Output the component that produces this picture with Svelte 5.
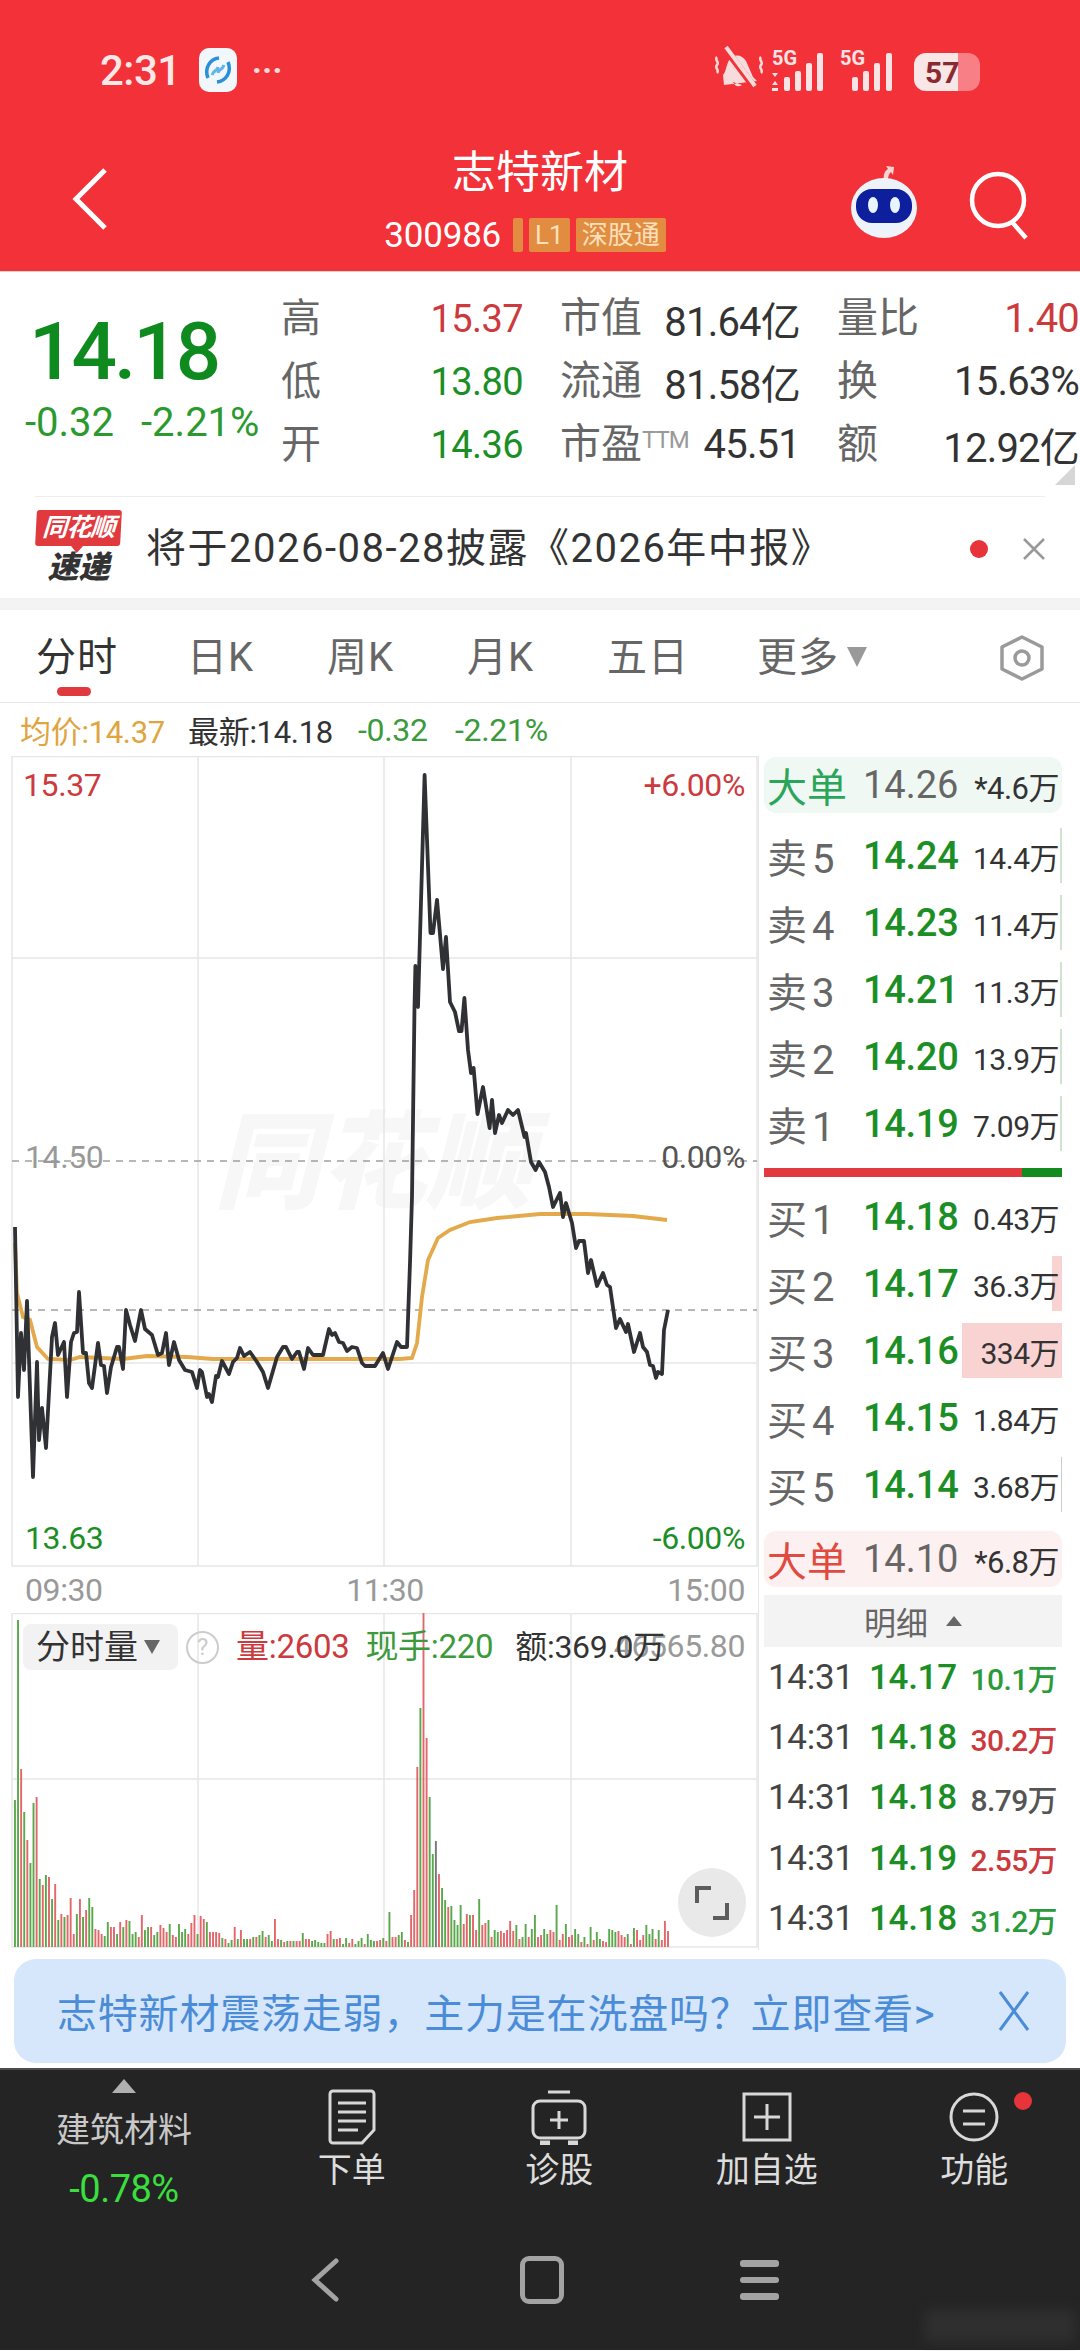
<script lang="ts">
  const quoteRows = [
    { k: "高", v: "15.37", c: "up", k2: "市值", v2: "81.64亿", k3: "量比", v3: "1.40", c3: "up" },
    { k: "低", v: "13.80", c: "down", k2: "流通", v2: "81.58亿", k3: "换", v3: "15.63%", c3: "" },
    { k: "开", v: "14.36", c: "down", k2: "市盈", ttm: true, v2: "45.51", k3: "额", v3: "12.92亿", c3: "" },
  ];
  const tabs = ["日K", "周K", "月K", "五日"];

  const sells = [
    ["卖", "5", "14.24", "14.4万"],
    ["卖", "4", "14.23", "11.4万"],
    ["卖", "3", "14.21", "11.3万"],
    ["卖", "2", "14.20", "13.9万"],
    ["卖", "1", "14.19", "7.09万"],
  ];
  const buys = [
    ["买", "1", "14.18", "0.43万", 0],
    ["买", "2", "14.17", "36.3万", 10],
    ["买", "3", "14.16", "334万", 100],
    ["买", "4", "14.15", "1.84万", 0],
    ["买", "5", "14.14", "3.68万", 1],
  ];
  const trades = [
    ["14.17", "10.1万", "down"],
    ["14.18", "30.2万", "up"],
    ["14.18", "8.79万", ""],
    ["14.19", "2.55万", "up"],
    ["14.18", "31.2万", "down"],
  ];

  const price =
    "15,1227 18,1397 21,1333 24,1370 27,1301 33,1477 37,1362 39,1440 42,1408 46,1448 52,1337 55,1323 58,1355 64,1342 67,1397 71,1342 74,1333 77,1332 79,1292 83,1353 86,1353 89,1383 92,1388 98,1343 101,1365 104,1366 107,1393 111,1367 117,1347 119,1347 123,1369 126,1310 130,1325 135,1341 141,1310 145,1329 152,1335 158,1355 162,1353 166,1333 169,1365 174,1342 179,1360 185,1370 192,1372 197,1388 200,1370 202,1372 207,1397 209,1394 212,1402 216,1376 218,1377 222,1361 229,1374 233,1362 237,1358 240,1348 244,1356 250,1352 257,1362 263,1372 268,1388 277,1357 283,1347 286,1347 292,1359 297,1352 299,1352 304,1369 308,1348 313,1355 323,1355 329,1329 332,1335 335,1333 339,1342 343,1343 347,1351 352,1347 357,1348 362,1363 365,1366 375,1366 383,1353 388,1369 392,1357 397,1342 401,1347 407,1347 410,1263 412,1197 414.5,1007 415.4,966 418,1007 424.6,775 430.5,933 433,933 437,900 443,969 446,937 450,1002 455,1012 459,1031 461.5,1031 464.4,998 468,1050 471,1073 473.6,1068 477.5,1114 483,1087 489.6,1128 492,1100 495,1133 499,1115 502,1123 508,1110 513,1115 518,1110 524.5,1137 526,1133 531,1162 535.6,1170 539,1162 545,1172 549,1187 553,1207 560,1193 563,1217 566,1203 572,1223 576,1248 579,1241 584,1241 588,1273 591,1260 597,1286 603,1273 607,1285 610,1287 616,1328 620,1319 626,1332 628,1324 634,1352 640,1333 643,1347 647,1352 650,1365 653,1366 656,1378 658,1372 662,1374 664,1330 668,1310";
  const average =
    "15,1243 17,1293 23,1317 30,1320 37,1347 48,1359 70,1360 80,1357 100,1358 123,1359 147,1356 187,1357 213,1359 260,1359 333,1359 400,1359 412,1358 417,1343 422,1297 428,1260 438,1238 450,1230 470,1222 497,1218 540,1214 587,1214 633,1216 667,1220";

  // positive = red bar, negative = green bar
  const volume = [
    -147, -327, 178, -135, 107, -84, -144, 150, -68, 62, -72, 70, -48, 63, -27, 33, -30, 32, 49, 13, -33, 48, -30, 37, -49, -40, 18, 17, 13, -11,
    -25, 20, 20, -13, 25, -20, 27, -26, -13, -15, 10, 32, -17, -20, 20, -12, -15, 22, 19, 15, -23, 12, 10, -23, -15, -18, 13, 24, 32, -13,
    31, 28, -25, 15, 15, 15, 14, -9, 8, -4, -7, 20, -8, 17, -8, -8, 8, -10, 10, -12, -16, 10, -12, -6, 28, 8, -7, 5, -6, 6,
    -6, 6, 6, -14, 8, 8, -6, -7, -5, -4, -4, 13, 16, -8, 8, 9, -3, -9, 4, 8, -3, -6, -9, 3, -13, -7, -6, 6, 7, -9,
    6, -35, 10, 10, -12, -15, 7, -5, 32, 57, 180, -239, 334, 209, -150, -93, -106, 73, -59, -47, 40, -41, -27, -22, -42, 23, 33, -32, 32, 17,
    -48, 22, 24, -27, 10, -17, -15, 16, 14, 17, 26, 16, -22, 8, -10, -23, 10, -18, -32, 10, 12, -18, -13, 17, 15, -42, 7, 13, -23, 10,
    12, -18, -13, 5, -10, 3, -20, 7, -15, -8, 6, 5, -18, -17, -15, 16, 12, 10, -13, 3, -19, 17, 7, 12, -22, -13, -18, 8, -17, 7, 26, 16,
  ];
  const barColor = (h: number) => (h === -106 ? "#77787c" : h > 0 ? "#e2666a" : "#5aa84c");
</script>

<div class="page">
  <header class="top">
    <div class="status">
      <span class="clock">2:31</span>
      <svg class="appicon" viewBox="0 0 38 44" width="38" height="44">
        <rect width="38" height="44" rx="10" fill="#f2f7fc" />
        <path d="M9 30C5 20 11 11 20 10M29 14c4 10-2 19-11 20" fill="none" stroke="#2a8fd8" stroke-width="3.5" />
        <path d="M13 27c2-6 5-3 6-8M25 17c-2 6-5 3-6 8" fill="none" stroke="#5fb4e8" stroke-width="3" />
      </svg>
      <span class="dots">···</span>
      <span class="grow"></span>
      <svg class="sysicons" viewBox="0 0 270 50" width="270" height="50">
        <g fill="none" stroke="#f8dcdc" stroke-width="3">
          <path d="M11 30c4-4 3-14 9-18 5-3 11-1 14 4l7 16 4 4-33 4zM21 37c2 5 6 5 9 3" fill="#f8dcdc" stroke="none" />
          <path d="M12 2 42 42" stroke="#f23238" stroke-width="7" />
          <path d="M14 2 43 41" stroke-width="4" />
          <path d="M5 12c-3 3 3 5 0 8s3 5 0 8M49 12c-3 3 3 5 0 8s3 5 0 8" stroke-width="2.5" />
        </g>
        <g fill="#f8e4e4">
          <text x="60" y="20" class="fiveg">5G</text>
          <rect x="72" y="32" width="6" height="14" rx="2" /><rect x="83" y="26" width="6" height="20" rx="2" /><rect x="94" y="18" width="6" height="28" rx="2" /><rect x="105" y="8" width="6" height="38" rx="2" />
          <path d="M60 28l3 4 3-4zM60 40l3-4 3 4zM60 46h6v-3h-6z" />
          <text x="128" y="20" class="fiveg">5G</text>
          <rect x="140" y="32" width="6" height="14" rx="2" /><rect x="151" y="26" width="6" height="20" rx="2" /><rect x="162" y="18" width="6" height="28" rx="2" /><rect x="174" y="8" width="6" height="38" rx="2" />
        </g>
        <rect x="202" y="8" width="66" height="38" rx="12" fill="#f77f85" />
        <path d="M214 8h32v38h-32a12 12 0 0 1-12-12V20a12 12 0 0 1 12-12z" fill="#f9e6e6" />
        <text x="213" y="38" class="batt">57</text>
      </svg>
    </div>
    <div class="nav">
      <svg class="back" viewBox="0 0 50 70" width="50" height="70">
        <path d="M39 6 10 35l29 29" fill="none" stroke="#fff" stroke-width="5" />
      </svg>
      <div class="title">
        <div class="name">志特新材</div>
        <div class="code">
          <span>300986</span>
          <i class="tag stub"></i>
          <i class="tag">L1</i>
          <i class="tag">深股通</i>
        </div>
      </div>
      <svg class="robot" viewBox="0 0 72 80" width="72" height="80">
        <path d="M36 16c-1-6 1-9 4-11l-2-3 8 1-1 8-2-3c-2 2-3 4-3 8z" fill="#f6d6d0" />
        <ellipse cx="36" cy="44" rx="33" ry="30" fill="#eef3fa" />
        <rect x="8" y="25" width="56" height="34" rx="16" fill="#0d1f9c" />
        <ellipse cx="25" cy="41" rx="5" ry="8" fill="#e8f4ff" /><ellipse cx="47" cy="41" rx="5" ry="8" fill="#e8f4ff" />
      </svg>
      <svg class="search" viewBox="0 0 64 72" width="64" height="72">
        <circle cx="30" cy="30" r="26" fill="none" stroke="#fff" stroke-width="4.5" />
        <path d="M44 52 58 68" stroke="#fff" stroke-width="4.5" />
      </svg>
    </div>
  </header>

  <section class="quote">
    <div class="now">
      <div class="big">14.18</div>
      <div class="change"><span>-0.32</span><span>-2.21%</span></div>
    </div>
    <div class="facts">
      {#each quoteRows as r}
        <div class="fact">
          <span class="k">{r.k}</span>
          <span class="v {r.c}">{r.v}</span>
          <span class="k k2">{r.k2}{#if r.ttm}<sup>TTM</sup>{/if}</span>
          <span class="v dark">{r.v2}</span>
          <span class="k k3">{r.k3}</span>
          <span class="v dark {r.c3}">{r.v3}</span>
        </div>
      {/each}
    </div>
    <i class="corner"></i>
  </section>

  <section class="notice">
    <div class="logo">
      <div class="logo-red">同花顺</div>
      <div class="logo-txt">速递</div>
    </div>
    <span class="notice-text">将于2026-08-28披露《2026年中报》</span>
    <i class="dot"></i>
    <svg class="x" viewBox="0 0 24 24" width="24" height="24"><path d="M2 2 22 22M22 2 2 22" stroke="#999" stroke-width="2.5" /></svg>
  </section>
  <div class="band"></div>

  <nav class="tabs">
    <span class="tab active">分时<i></i></span>
    {#each tabs as t}<span class="tab">{t}</span>{/each}
    <span class="tab more">更多<b></b></span>
    <svg class="hex" viewBox="0 0 46 46" width="46" height="46">
      <path d="M23 2 43 12v22L23 44 3 34V12z" fill="none" stroke="#9a9a9a" stroke-width="3.5" stroke-linejoin="round" />
      <circle cx="23" cy="23" r="7" fill="none" stroke="#9a9a9a" stroke-width="3.5" />
    </svg>
  </nav>

  <div class="info">
    <span class="avg">均价:14.37</span>
    <span class="latest">最新:14.18</span>
    <span class="down">-0.32</span>
    <span class="down">-2.21%</span>
  </div>

  <main class="main">
    <div class="left">
      <div class="chart">
        <div class="mark">同花顺</div>
        <svg viewBox="0 756 758 811" width="758" height="811">
          <g stroke="#e6e6e6" stroke-width="1.5" fill="none">
            <rect x="12" y="756.5" width="745" height="809.5" />
            <path d="M198 756V1566M384 756V1566M571 756V1566M12 958H757M12 1363H757" />
          </g>
          <path d="M12 1161H757M12 1310H757" stroke="#a0a09a" stroke-width="1.5" stroke-dasharray="7 6" />
          <polyline points={average} fill="none" stroke="#e3a94a" stroke-width="3.8" />
          <polyline points={price} fill="none" stroke="#303135" stroke-width="3.8" stroke-linejoin="round" />
        </svg>
        <span class="lab tl up">15.37</span>
        <span class="lab tr up">+6.00%</span>
        <span class="lab ml gray">14.50</span>
        <span class="lab mr ink">0.00%</span>
        <span class="lab bl down">13.63</span>
        <span class="lab br down">-6.00%</span>
      </div>
      <div class="axis"><span>09:30</span><span>11:30</span><span>15:00</span></div>
      <div class="volume">
        <svg viewBox="0 1613 758 335" width="758" height="335">
          <g stroke="#e6e6e6" stroke-width="1.5" fill="none">
            <rect x="12" y="1613.5" width="745" height="333.5" />
            <path d="M198 1613V1947M384 1613V1947M571 1613V1947M12 1779H757" />
          </g>
          {#each volume as h, i}
            <rect x={14 + i * 3.095} y={1947 - Math.abs(h)} width="1.9" height={Math.abs(h)} fill={barColor(h)} />
          {/each}
        </svg>
        <span class="maxvol">46565.80</span>
        <div class="vol-head">
          <span class="pick">分时量<b></b></span>
          <span class="help">?</span>
          <span class="up">量:2603</span>
          <span class="down">现手:220</span>
          <span class="amt">额:369.0万</span>
        </div>
        <button class="expand" aria-label="expand">
          <svg viewBox="0 0 36 36" width="36" height="36"><path d="M3 18V3H17M33 18v15H19" fill="none" stroke="#5c5c5c" stroke-width="4" /></svg>
        </button>
      </div>
    </div>

    <aside class="book">
      <div class="bigorder buy">
        <span class="bo-k">大单</span><span class="bo-p">14.26</span><span class="bo-v">*4.6万</span>
      </div>
      <div class="levels sell">
        {#each sells as s}
          <div class="level">
            <span class="lv-k">{s[0]}<em>{s[1]}</em></span><span class="lv-p">{s[2]}</span><span class="lv-v">{s[3]}</span>
            <i class="sellbar"></i>
          </div>
        {/each}
      </div>
      <div class="ratio"><i></i></div>
      <div class="levels buys">
        {#each buys as b}
          <div class="level">
            <i class="buybar" class:thin={b[4] === 1} style={`width: ${b[4]}px`}></i>
            <span class="lv-k">{b[0]}<em>{b[1]}</em></span><span class="lv-p">{b[2]}</span><span class="lv-v">{b[3]}</span>
          </div>
        {/each}
      </div>
      <div class="bigorder sellside">
        <span class="bo-k">大单</span><span class="bo-p">14.10</span><span class="bo-v">*6.8万</span>
      </div>
      <div class="detail-head">明细<b></b></div>
      <div class="trades">
        {#each trades as t}
          <div class="trade">
            <span class="t-t">14:31</span><span class="t-p">{t[0]}</span><span class="t-v {t[2]}">{t[1]}</span>
          </div>
        {/each}
      </div>
    </aside>
  </main>

  <div class="banner">
    <span>志特新材震荡走弱，主力是在洗盘吗？立即查看&gt;</span>
    <svg viewBox="0 0 32 42" width="32" height="42"><path d="M2 2 30 40M30 2 2 40" stroke="#4a8cd8" stroke-width="3" /></svg>
  </div>

  <footer class="bottom">
    <div class="actions">
      <div class="sector">
        <i></i>
        <span>建筑材料</span>
        <span class="sector-pct">-0.78%</span>
      </div>
      <div class="act">
        <svg viewBox="0 0 50 56" width="50" height="56" fill="none" stroke="#d8d8d8" stroke-width="3">
          <path d="M6 2h38a3 3 0 0 1 3 3v36l-12 13H6a3 3 0 0 1-3-3V5a3 3 0 0 1 3-3z" />
          <path d="M11 14h28M11 23h28M11 32h28M11 41h20" />
        </svg>
        <span>下单</span>
      </div>
      <div class="act">
        <svg viewBox="0 0 56 56" width="56" height="56" fill="none" stroke="#d8d8d8" stroke-width="3">
          <path d="M17 3h22" />
          <rect x="2" y="12" width="52" height="37" rx="7" />
          <path d="M9 54h10M37 54h10" stroke-width="5" />
          <path d="M28 22v18M19 31h18" />
        </svg>
        <span>诊股</span>
      </div>
      <div class="act">
        <svg viewBox="0 0 50 50" width="50" height="50" fill="none" stroke="#d8d8d8" stroke-width="3" class="plus">
          <rect x="2" y="2" width="46" height="46" />
          <path d="M25 12v26M12 25h26" />
        </svg>
        <span>加自选</span>
      </div>
      <div class="act">
        <svg viewBox="0 0 50 50" width="50" height="50" fill="none" stroke="#d8d8d8" stroke-width="3" class="plus">
          <circle cx="25" cy="25" r="23" />
          <path d="M14 19h22M14 32h22" />
        </svg>
        <span>功能</span>
        <i class="badge"></i>
      </div>
    </div>
    <div class="sysnav">
      <svg viewBox="0 0 28 44" width="28" height="44"><path d="M25 3 4 22l21 19" fill="none" stroke="#a3a3a3" stroke-width="5" stroke-linecap="round" /></svg>
      <i class="home"></i>
      <i class="menu"><b></b><b></b><b></b></i>
    </div>
  </footer>
</div>

<style>
  :global(body) {
    margin: 0;
    background: #fff;
  }

  .page {
    width: 1080px;
    height: 2351px;
    overflow: hidden;
    background: #fff;
    font-family: Roboto, "Noto Sans CJK SC", sans-serif;
    color: #333;
  }

  i,
  em {
    font-style: normal;
  }

  .up {
    color: #cc3a3e;
  }

  .down {
    color: #1b8f26;
  }

  /* header */
  .top {
    height: 271px;
    background: #f23238;
    color: #fff;
    border-bottom: 1px solid #d8d0d0;
  }

  .status {
    display: flex;
    align-items: center;
    height: 140px;
    padding: 0 98px 0 100px;
    box-sizing: border-box;
  }

  .clock {
    font-size: 42px;
    font-weight: 500;
    color: #fde8e8;
    letter-spacing: -0.5px;
  }

  .appicon {
    margin-left: 18px;
  }

  .dots {
    margin-left: 15px;
    font-size: 34px;
    font-weight: 700;
    line-height: 1;
    color: #fbd9d9;
  }

  .grow {
    flex: 1;
  }

  .fiveg {
    font-size: 20px;
    font-weight: 700;
  }

  .batt {
    font-size: 30px;
    font-weight: 700;
    fill: #8a2a30;
  }

  .nav {
    display: flex;
    align-items: flex-start;
    height: 131px;
    padding-left: 66px;
    margin-top: -8px;
  }

  .back {
    margin-top: 32px;
    flex: none;
  }

  .title {
    flex: none;
    width: 600px;
    margin-left: 124px;
    text-align: center;
  }

  .name {
    margin-top: 10px;
    font-size: 44px;
    line-height: 62px;
    color: #fff;
  }

  .code {
    display: flex;
    align-items: center;
    justify-content: center;
    gap: 6px;
    height: 46px;
    margin-top: 8px;
    padding-right: 30px;
    font-size: 35px;
    letter-spacing: -0.2px;
    color: #fff;
  }

  .tag {
    background: #e28c41;
    color: #fbe0bc;
    font-size: 26px;
    line-height: 34px;
    padding: 0 6px;
    letter-spacing: 0;
    border-radius: 2px;
  }

  .tag.stub {
    width: 10px;
    height: 34px;
    box-sizing: border-box;
    padding: 0;
    margin-left: 6px;
  }

  .robot {
    flex: none;
    margin: 32px 0 0 8px;
  }

  .search {
    flex: none;
    margin: 38px 0 0 48px;
  }

  /* quote */
  .quote {
    position: relative;
    display: flex;
    height: 224px;
  }

  .now {
    width: 281px;
    flex: none;
  }

  .big {
    margin: 34px 0 0 29px;
    font-size: 80px;
    line-height: 92px;
    font-weight: 500;
    letter-spacing: -3px;
    color: #0f8a1e;
  }

  .change {
    display: flex;
    gap: 27px;
    margin: 3px 0 0 25px;
    font-size: 40px;
    line-height: 44px;
    letter-spacing: 0;
    color: #2a9a2e;
    white-space: nowrap;
  }

  .facts {
    flex: 1;
    padding-top: 15px;
  }

  .fact {
    display: grid;
    grid-template-columns: 60px 182px 120px 157px 120px 1fr;
    align-items: center;
    height: 63px;
    white-space: nowrap;
    padding-right: 1px;
  }

  .k {
    font-size: 40px;
    color: #666;
    line-height: 63px;
  }

  .k2,
  .k3 {
    margin-left: 37px;
    font-size: 41px;
  }

  sup {
    font-size: 24px;
    color: #999;
    vertical-align: 10px;
    line-height: 0;
    letter-spacing: -1px;
  }

  .v {
    text-align: right;
    font-size: 38px;
    letter-spacing: -0.6px;
  }

  .dark {
    font-size: 40px;
    letter-spacing: -0.8px;
    color: #333;
  }

  .dark.up {
    color: #cc3a3e;
  }

  .corner {
    position: absolute;
    right: 5px;
    bottom: 11px;
    border-left: 20px solid transparent;
    border-bottom: 20px solid #d6d6d6;
  }

  /* notice */
  .notice {
    display: flex;
    align-items: center;
    height: 102px;
    margin: 0 35px;
    border-top: 1px solid #eee;
    box-sizing: border-box;
    position: relative;
  }

  .logo {
    width: 85px;
    flex: none;
    margin-left: 1px;
    text-align: center;
  }

  .logo-red {
    position: relative;
    height: 36px;
    background: #e0393e;
    color: #fff;
    font-size: 25px;
    font-weight: 700;
    font-style: italic;
    line-height: 36px;
    letter-spacing: -1px;
    border-radius: 3px;
    transform: skewX(-3deg);
  }

  .logo-red::after {
    content: "";
    position: absolute;
    left: 36px;
    top: 36px;
    border-left: 6px solid transparent;
    border-right: 6px solid transparent;
    border-top: 7px solid #e0393e;
  }

  .logo-txt {
    margin-top: 5px;
    font-size: 31px;
    line-height: 34px;
    font-weight: 900;
    font-style: italic;
    color: #333;
  }

  .notice-text {
    margin: -6px 0 0 25px;
    font-size: 40px;
    letter-spacing: 1.5px;
    color: #333;
    white-space: nowrap;
  }

  .dot {
    position: absolute;
    left: 935px;
    top: 43px;
    width: 18px;
    height: 18px;
    border-radius: 50%;
    background: #e7333a;
  }

  .x {
    position: absolute;
    left: 987px;
    top: 40px;
  }

  .band {
    height: 12px;
    background: #f3f3f3;
  }

  /* tabs */
  .tabs {
    position: relative;
    height: 93px;
    border-bottom: 1px solid #e8e8e8;
    display: flex;
    box-sizing: border-box;
    padding-left: 36px;
    align-items: center;
  }

  .tab {
    position: relative;
    width: 140px;
    font-size: 40px;
    color: #666;
    letter-spacing: 1px;
    white-space: nowrap;
    margin-top: -4px;
  }

  .tab:first-child {
    width: 151px;
  }

  .more {
    margin-left: 10px;
  }

  .active {
    color: #333;
  }

  .active i {
    position: absolute;
    left: 21px;
    top: 62px;
    width: 34px;
    height: 9px;
    border-radius: 5px;
    background: #e0393e;
  }

  .more b {
    display: inline-block;
    margin-left: 8px;
    vertical-align: 4px;
    border-left: 10px solid transparent;
    border-right: 10px solid transparent;
    border-top: 20px solid #999;
  }

  .hex {
    position: absolute;
    left: 999px;
    top: 25px;
  }

  .info {
    display: flex;
    align-items: center;
    height: 53px;
    padding-left: 20px;
    font-size: 31px;
    letter-spacing: -0.3px;
    color: #333;
    white-space: nowrap;
  }

  .avg {
    color: #e0a440;
    width: 168px;
  }

  .latest {
    width: 170px;
  }

  .info .down {
    width: 97px;
    font-size: 32px;
    color: #3c9a3c;
  }

  /* main area */
  .main {
    display: flex;
    height: 1194px;
  }

  .left {
    width: 758px;
    flex: none;
  }

  .chart,
  .volume {
    position: relative;
    line-height: 0;
  }

  .chart svg,
  .volume svg {
    display: block;
  }

  .mark {
    position: absolute;
    left: 214px;
    top: 348px;
    font-size: 106px;
    line-height: 120px;
    font-weight: 900;
    font-style: italic;
    color: #f7f7f7;
    white-space: nowrap;
  }

  .chart > svg {
    position: relative;
  }

  .lab {
    position: absolute;
    font-size: 32px;
    line-height: 36px;
    letter-spacing: -0.4px;
  }

  .tl {
    left: 23px;
    top: 11px;
  }

  .tr {
    right: 13px;
    top: 11px;
  }

  .ml {
    left: 25px;
    top: 383px;
    color: #999;
  }

  .mr {
    right: 13px;
    top: 383px;
    color: #555;
  }

  .bl {
    left: 25px;
    top: 764px;
  }

  .br {
    right: 13px;
    top: 764px;
  }

  .axis {
    display: flex;
    justify-content: space-between;
    height: 46px;
    padding: 0 13px 0 25px;
    align-items: center;
    font-size: 32px;
    letter-spacing: -0.4px;
    color: #999;
  }

  .vol-head {
    position: absolute;
    left: 23px;
    top: 11px;
    display: flex;
    align-items: center;
    font-size: 33px;
    line-height: 46px;
    white-space: nowrap;
    letter-spacing: -0.3px;
  }

  .pick {
    display: flex;
    align-items: center;
    width: 155px;
    height: 46px;
    box-sizing: border-box;
    padding-left: 13px;
    background: #f2f2f2;
    border-radius: 8px;
    color: #333;
    font-size: 34px;
    letter-spacing: 0;
  }

  .pick b {
    margin-left: 6px;
    border-left: 8px solid transparent;
    border-right: 8px solid transparent;
    border-top: 14px solid #666;
  }

  .help {
    width: 29px;
    height: 29px;
    margin: 0 17px 0 8px;
    border: 2.5px solid #ccc;
    border-radius: 50%;
    text-align: center;
    font-size: 24px;
    line-height: 29px;
    color: #ccc;
  }

  .vol-head .down {
    margin-left: 16px;
    color: #3c9a3c;
  }

  .amt {
    margin-left: 22px;
    font-size: 32px;
    color: #333;
  }

  .vol-head .up {
    color: #cc3a3e;
  }

  .maxvol {
    position: absolute;
    right: 13px;
    top: 15px;
    font-size: 32px;
    line-height: 36px;
    letter-spacing: -0.4px;
    color: #999;
  }

  .expand {
    position: absolute;
    left: 678px;
    top: 255px;
    width: 68px;
    height: 69px;
    padding: 0;
    border: 0;
    border-radius: 50%;
    background: #e9e9e9;
    display: flex;
    align-items: center;
    justify-content: center;
  }

  /* order book */
  .book {
    width: 322px;
    box-sizing: border-box;
    padding-left: 5px;
    border-left: 1.5px solid #e6e6e6;
  }

  .bigorder,
  .level,
  .trade {
    display: flex;
    align-items: center;
    position: relative;
    width: 298px;
    white-space: nowrap;
  }

  .bigorder {
    height: 56px;
    border-radius: 12px;
    margin-top: 1px;
  }

  .bigorder.buy {
    background: #f0f8f4;
  }

  .bigorder.buy .bo-k {
    color: #2aa55a;
  }

  .bigorder.sellside {
    margin-top: 13px;
    background: #fdf0f0;
  }

  .bigorder.sellside .bo-k {
    color: #e04a40;
  }

  .bo-k {
    width: 99px;
    padding-left: 3px;
    box-sizing: border-box;
    font-size: 40px;
  }

  .bo-p {
    width: 95px;
    font-size: 38px;
    color: #666;
  }

  .bo-v,
  .lv-v {
    position: relative;
    flex: 1;
    text-align: right;
    padding-right: 3px;
    font-size: 30px;
    letter-spacing: -0.5px;
    color: #333;
  }

  .bo-v {
    font-size: 31px;
  }

  .levels {
    position: relative;
  }

  .levels.sell {
    margin-top: 9px;
  }

  .level {
    height: 67px;
  }

  .lv-k {
    position: relative;
    width: 99px;
    padding-left: 3px;
    box-sizing: border-box;
    font-size: 40px;
    color: #666;
  }

  .lv-k em {
    margin-left: 5px;
  }

  .lv-p {
    position: relative;
    width: 95px;
    font-size: 38px;
    font-weight: 500;
    letter-spacing: -0.3px;
    color: #1b8f26;
  }

  .sellbar {
    position: absolute;
    right: 0;
    top: 6px;
    bottom: 6px;
    width: 2px;
    background: #cfe3cf;
  }

  .buybar {
    position: absolute;
    right: 0;
    top: 6px;
    bottom: 6px;
    background: #f9d2d2;
  }

  .buybar.thin {
    background: #ccc;
  }

  .ratio {
    height: 9px;
    margin-top: 11px;
    width: 298px;
    background: #128c1e;
  }

  .ratio i {
    display: block;
    width: 258px;
    height: 100%;
    background: #e0393e;
  }

  .buys {
    margin-top: 6px;
  }

  .detail-head {
    display: flex;
    align-items: center;
    justify-content: center;
    gap: 18px;
    width: 298px;
    height: 52px;
    margin-top: 8px;
    background: #f3f3f3;
    font-size: 32px;
    color: #666;
  }

  .detail-head b {
    border-left: 8px solid transparent;
    border-right: 8px solid transparent;
    border-bottom: 10px solid #666;
  }

  .trade {
    height: 60.4px;
  }

  .t-t {
    width: 105px;
    padding-left: 4px;
    box-sizing: border-box;
    font-size: 35px;
    letter-spacing: -0.3px;
    color: #444;
  }

  .t-p {
    width: 91px;
    font-size: 35px;
    font-weight: 500;
    letter-spacing: -0.3px;
    color: #1b8f26;
  }

  .t-v {
    flex: 1;
    text-align: right;
    padding-right: 5px;
    font-size: 30px;
    font-weight: 500;
    letter-spacing: -0.6px;
    color: #555;
  }

  .t-v.up {
    color: #cc3a3e;
  }

  .t-v.down {
    color: #2a9a3a;
  }

  /* banner */
  .banner {
    display: flex;
    align-items: center;
    justify-content: space-between;
    height: 104px;
    margin: 9px 14px 0;
    padding: 0 36px 0 43px;
    background: #d6e6fb;
    border-radius: 22px;
    font-size: 40px;
    letter-spacing: 0.8px;
    color: #4a8cd8;
    white-space: nowrap;
  }

  /* bottom bar */
  .bottom {
    position: relative;
    margin-top: 5px;
    height: 282px;
    background: #242424;
    border-top: 2px solid #4c4c4c;
    box-sizing: border-box;
  }

  .bottom::after {
    content: "";
    position: absolute;
    left: 925px;
    bottom: 8px;
    width: 150px;
    height: 32px;
    background: #2f2f2f;
    filter: blur(6px);
  }

  .actions {
    display: flex;
    position: relative;
    height: 158px;
  }

  .sector {
    width: 248px;
    padding-top: 9px;
    box-sizing: border-box;
    display: flex;
    flex-direction: column;
    align-items: center;
    color: #c8c8c8;
    font-size: 34px;
    line-height: 50px;
  }

  .sector i {
    width: 0;
    margin-bottom: 12px;
    border-left: 12px solid transparent;
    border-right: 12px solid transparent;
    border-bottom: 14px solid #b0b0b0;
  }

  .sector-pct {
    margin-top: 9px;
    font-size: 38px;
    color: #3adf3f;
    letter-spacing: -0.5px;
  }

  .act {
    position: relative;
    width: 207.5px;
    padding-top: 19px;
    box-sizing: border-box;
    display: flex;
    flex-direction: column;
    align-items: center;
    font-size: 34px;
    line-height: 50px;
    color: #ddd;
  }

  .act svg.plus {
    margin: 3px 0 3px;
  }

  .badge {
    position: absolute;
    left: 143px;
    top: 22px;
    width: 18px;
    height: 18px;
    border-radius: 50%;
    background: #e7333a;
  }

  .sysnav {
    display: flex;
    align-items: center;
    height: 44px;
    margin-top: 30px;
    padding-left: 311px;
  }

  .home {
    width: 34px;
    height: 38px;
    margin-left: 181px;
    border: 5px solid #a3a3a3;
    border-radius: 9px;
  }

  .menu {
    display: flex;
    flex-direction: column;
    gap: 10px;
    margin-left: 176px;
  }

  .menu b {
    display: block;
    width: 39px;
    height: 6.5px;
    border-radius: 3px;
    background: #a3a3a3;
  }
</style>
